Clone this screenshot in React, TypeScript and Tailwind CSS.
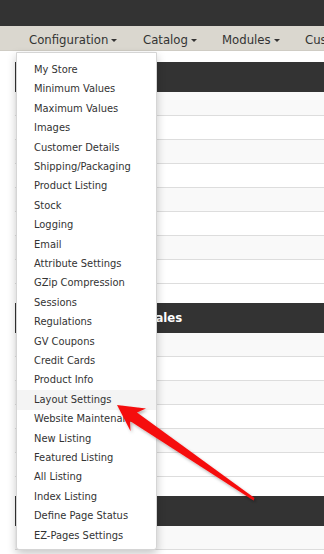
import React from "react";

const menuItems = [
  "My Store",
  "Minimum Values",
  "Maximum Values",
  "Images",
  "Customer Details",
  "Shipping/Packaging",
  "Product Listing",
  "Stock",
  "Logging",
  "Email",
  "Attribute Settings",
  "GZip Compression",
  "Sessions",
  "Regulations",
  "GV Coupons",
  "Credit Cards",
  "Product Info",
  "Layout Settings",
  "Website Maintenance",
  "New Listing",
  "Featured Listing",
  "All Listing",
  "Index Listing",
  "Define Page Status",
  "EZ-Pages Settings",
];

const font = { fontFamily: '"DejaVu Sans Condensed", "DejaVu Sans", Verdana, sans-serif' };

function Caret() {
  return (
    <span className="ml-[3px] inline-block h-0 w-0 border-x-[3px] border-t-[3px] border-x-transparent border-t-[#333] align-middle" />
  );
}

function Panel({ title, rows, last }: { title: string; rows: number; last?: boolean }) {
  return (
    <div className={last ? "" : "mb-[19px]"}>
      <div className="flex h-[30px] items-center bg-[#333] pl-[132px] text-[13px] font-bold text-white">
        {title}
      </div>
      {Array.from({ length: rows }).map((_, i) => (
        <div
          key={i}
          className={`h-[24px] border-b border-[#ddd] ${i % 2 === 0 ? "bg-[#f9f9f9]" : "bg-white"}`}
        />
      ))}
    </div>
  );
}

export default function App() {
  return (
    <div className="relative h-[554px] w-[324px] overflow-hidden bg-white text-[#333]" style={font}>
      <div className="h-[26px] bg-[#333]" />
      <nav className="flex h-[25px] items-center overflow-hidden whitespace-nowrap border-b border-[#cfccc4] bg-[#dad7cf] pl-[29px] pt-[3px] text-[13px] text-[#333]">
        <div className="w-[114px] shrink-0">
          Configuration
          <Caret />
        </div>
        <div className="w-[79px] shrink-0">
          Catalog
          <Caret />
        </div>
        <div className="w-[83px] shrink-0">
          Modules
          <Caret />
        </div>
        <div className="shrink-0">
          Customers
          <Caret />
        </div>
      </nav>

      <div className="pl-[15px] pt-[11px]">
        <Panel title="" rows={8} />
        <Panel title="Sales" rows={6} />
        <Panel title="" rows={1} last />
      </div>

      <ul className="absolute left-[16px] top-[52px] w-[141px] rounded-b-[3px] border border-[#d5d5d5] bg-white pb-[3px] pt-[7.5px] shadow-[0_4px_10px_rgba(0,0,0,0.22)]">
        {menuItems.map((item) => (
          <li
            key={item}
            className={`flex h-[19.42px] items-center whitespace-nowrap overflow-hidden pl-[17px] text-[11px] text-[#333] ${
              item === "Layout Settings" ? "bg-[#f4f4f4]" : ""
            }`}
          >
            {item}
          </li>
        ))}
      </ul>

      <svg
        className="pointer-events-none absolute left-0 top-0"
        width="324"
        height="554"
        viewBox="0 0 324 554"
      >
        <defs>
          <filter id="sh" x="-20%" y="-20%" width="140%" height="140%">
            <feDropShadow dx="1.5" dy="2" stdDeviation="1.5" floodColor="#000" floodOpacity="0.3" />
          </filter>
        </defs>
        <polygon
          points="117,405 146,408.5 137,412.5 254.5,498 253.5,500.5 130,421 130.5,431"
          fill="#f51010"
          filter="url(#sh)"
        />
      </svg>
    </div>
  );
}
